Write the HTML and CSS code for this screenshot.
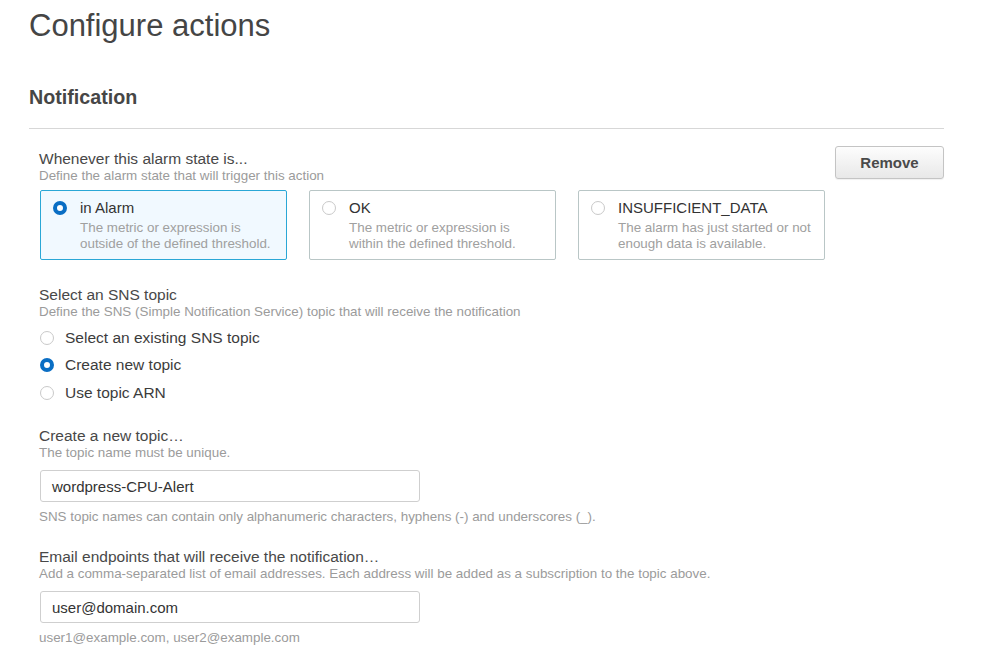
FILE: index.html
```html
<!DOCTYPE html>
<html lang="en">
<head>
<meta charset="utf-8">
<title>Configure actions</title>
<link rel="stylesheet" href="styles.css">
</head>
<body>
<div class="page">
  <h1 class="title">Configure actions</h1>
  <h2 class="section-title">Notification</h2>
  <div class="section">
    <div class="head-row">
      <div class="field-head">
        <div class="label">Whenever this alarm state is...</div>
        <div class="sub">Define the alarm state that will trigger this action</div>
      </div>
      <button class="btn">Remove</button>
    </div>
    <div class="cards">
      <div class="card selected">
        <div class="card-top"><span class="radio on"></span><span class="card-title">in Alarm</span></div>
        <div class="card-desc">The metric or expression is outside of the defined threshold.</div>
      </div>
      <div class="card">
        <div class="card-top"><span class="radio"></span><span class="card-title">OK</span></div>
        <div class="card-desc">The metric or expression is within the defined threshold.</div>
      </div>
      <div class="card">
        <div class="card-top"><span class="radio"></span><span class="card-title">INSUFFICIENT_DATA</span></div>
        <div class="card-desc">The alarm has just started or not enough data is available.</div>
      </div>
    </div>

    <div class="field sns">
      <div class="label">Select an SNS topic</div>
      <div class="sub">Define the SNS (Simple Notification Service) topic that will receive the notification</div>
      <div class="options">
        <div class="option"><span class="radio"></span><span>Select an existing SNS topic</span></div>
        <div class="option"><span class="radio on"></span><span>Create new topic</span></div>
        <div class="option"><span class="radio"></span><span>Use topic ARN</span></div>
      </div>
    </div>

    <div class="field topic">
      <div class="label">Create a new topic…</div>
      <div class="sub">The topic name must be unique.</div>
      <div class="input">wordpress-CPU-Alert</div>
      <div class="hint">SNS topic names can contain only alphanumeric characters, hyphens (-) and underscores (_).</div>
    </div>

    <div class="field email">
      <div class="label">Email endpoints that will receive the notification…</div>
      <div class="sub">Add a comma-separated list of email addresses. Each address will be added as a subscription to the topic above.</div>
      <div class="input">user@domain.com</div>
      <div class="hint">user1@example.com, user2@example.com</div>
    </div>
  </div>
</div>
</body>
</html>
```

FILE: styles.css
```css
* { box-sizing: border-box; }
html, body { margin: 0; background: #fff; }
body {
  font-family: "Liberation Sans", Arial, Helvetica, sans-serif;
  color: #444;
}
.page {
  padding: 8px 55px 0 29px;
}
.title {
  margin: 0;
  font-size: 31px;
  line-height: 36px;
  font-weight: normal;
  color: #454545;
}
.section-title {
  margin: 41px 0 0 0;
  font-size: 19.7px;
  line-height: 24px;
  font-weight: bold;
  color: #464646;
  padding-bottom: 19px;
  border-bottom: 1px solid #d7d7d7;
}
.section {
  padding: 17px 0 0 10px;
}
.head-row {
  display: flex;
  justify-content: space-between;
  align-items: flex-start;
}
.field-head { padding-top: 4px; }
.label {
  font-size: 15.5px;
  line-height: 18px;
  color: #484848;
}
.sub {
  font-size: 13.4px;
  line-height: 16px;
  color: #9b9b9b;
}
.btn {
  width: 109px;
  height: 33px;
  border: 1px solid #c4c4c4;
  border-radius: 3px;
  background: linear-gradient(#fdfdfd, #e8e8e8);
  font-family: inherit;
  font-size: 15px;
  font-weight: bold;
  color: #4a4a4a;
  padding: 0;
  box-shadow: 0 1px 1px rgba(0,0,0,0.06);
}
.cards {
  display: flex;
  gap: 22px;
  margin-top: 6px;
  padding-left: 1px;
}
.card {
  width: 247px;
  height: 70px;
  border: 1px solid #b9c6c6;
  border-radius: 2px;
  padding: 7px 12px 7px 12px;
  background: #fff;
}
.card.selected {
  border-color: #2aa7d6;
  background: #f1f9ff;
}
.card-top {
  display: flex;
  align-items: center;
  height: 20px;
  gap: 13px;
}
.card-title {
  font-size: 15px;
  line-height: 20px;
  color: #333;
}
.card-desc {
  margin-top: 2px;
  padding-left: 27px;
  font-size: 13.4px;
  line-height: 16px;
  color: #a0a0a0;
}
.radio {
  flex: none;
  display: inline-block;
  width: 14px;
  height: 14px;
  border-radius: 50%;
  border: 1px solid #c9c9c9;
  background: #fff;
}
.radio.on {
  border: 4.5px solid #0a6ec4;
}
.sns { margin-top: 26px; }
.options { margin-top: 4px; }
.option {
  display: flex;
  align-items: center;
  gap: 11px;
  height: 27.5px;
  padding-left: 1px;
  font-size: 15.5px;
  color: #3c3c3c;
}
.topic { margin-top: 20.5px; }
.input {
  margin-top: 9px;
  margin-left: 1px;
  width: 380px;
  height: 32px;
  border: 1px solid #cfcfcf;
  border-radius: 3px;
  padding: 0 11px;
  display: flex;
  align-items: center;
  font-size: 15px;
  color: #333;
  background: #fff;
}
.hint {
  margin-top: 7px;
  font-size: 13.4px;
  line-height: 16px;
  color: #9b9b9b;
}
.email { margin-top: 23px; }
```
